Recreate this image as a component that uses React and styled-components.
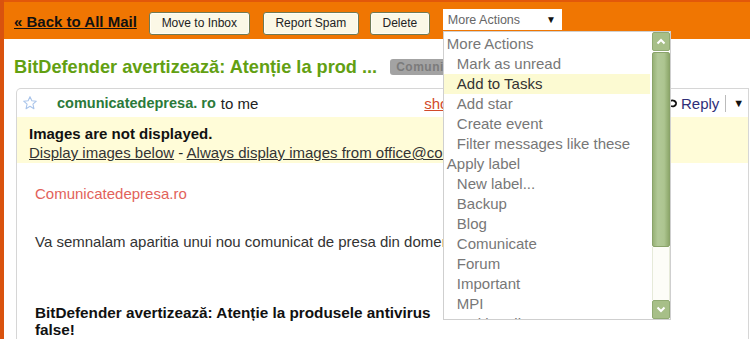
import React from "react";
import styled, { createGlobalStyle } from "styled-components";

const Global = createGlobalStyle`
  html, body { margin: 0; padding: 0; background: #fff; overflow: hidden; }
  body { font-family: "Liberation Sans", Arial, sans-serif; }
`;

const Page = styled.div`
  width: 746px;
  height: 339px;
  border-left: 4px solid #d9520e;
  background: #fff;
  overflow: hidden;
  position: relative;
`;

const TopBar = styled.div`
  height: 37px;
  border-top: 2px solid #e2580a;
  background: #f07602;
  display: flex;
  align-items: center;
  padding-left: 10px;
`;

const BackLink = styled.a`
  font-size: 15px;
  font-weight: bold;
  color: #111;
  text-decoration: underline;
  margin-top: 2px;
  margin-right: 12px;
  white-space: nowrap;
`;

const Button = styled.button`
  width: ${(p) => p.$w}px;
  height: 23px;
  margin-top: 5px;
  margin-right: ${(p) => p.$gap}px;
  padding: 0;
  border: 1px solid #6f7b55;
  border-radius: 3px;
  background: #fbf8e6;
  box-shadow: inset 0 0 0 1px #fffef6;
  font-family: "Liberation Sans", Arial, sans-serif;
  font-size: 12px;
  color: #222;
`;

const SelectWrap = styled.div`
  position: relative;
  align-self: flex-start;
  margin-top: 7px;
`;

const SelectBox = styled.div`
  width: 108px;
  height: 21px;
  background: #fff;
  display: flex;
  align-items: center;
  justify-content: space-between;
  padding: 0 6px 0 5px;
  font-size: 12.5px;
  color: #666;
`;

const Caret = styled.span`
  font-size: 10px;
  color: #111;
`;

const Menu = styled.div`
  position: absolute;
  left: 0;
  top: 22px;
  width: 226px;
  height: 287px;
  background: #fff;
  border: 1px solid #cfcfcf;
  display: flex;
  z-index: 10;
  overflow: hidden;
`;

const MenuList = styled.div`
  flex: 1;
  padding-top: 2px;
  padding-right: 2px;
`;

const MenuItem = styled.div`
  height: 20px;
  line-height: 20px;
  padding-left: ${(p) => (p.$head ? 3 : 13)}px;
  font-size: 15px;
  color: ${(p) => (p.$active ? "#333" : "#777")};
  background: ${(p) => (p.$active ? "#fcfad2" : "transparent")};
  white-space: nowrap;
`;

const ScrollBar = styled.div`
  width: 18px;
  display: flex;
  flex-direction: column;
`;

const ScrollBtn = styled.div`
  height: 17px;
  background: #a7bf88;
  border: 1px solid #90aa72;
  border-radius: 2px;
  display: flex;
  align-items: center;
  justify-content: center;
`;

const Thumb = styled.div`
  height: 193px;
  margin-top: 1px;
  background: linear-gradient(90deg, #98b277 0, #b2c997 30%, #adc590 70%, #8ea86c 100%);
  border: 1px solid #8aa36a;
  border-radius: 2px;
`;

const Track = styled.div`
  flex: 1;
  background: #fdfdf8;
  border-left: 1px solid #e6ead9;
  border-right: 1px solid #e6ead9;
`;

const SubjectRow = styled.div`
  display: flex;
  align-items: center;
  height: 42px;
  padding: 7px 0 0 10px;
  white-space: nowrap;
`;

const Subject = styled.div`
  font-size: 18.2px;
  color: #62a012;
  font-weight: bold;
`;

const Badge = styled.span`
  margin-left: 13px;
  background: #a3a3a3;
  color: #7b7b7b;
  font-size: 12px;
  font-weight: bold;
  height: 16px;
  line-height: 16px;
  padding: 0 6px;
  border-radius: 3px;
  letter-spacing: 0.5px;
`;

const Card = styled.div`
  margin-left: 12px;
  margin-right: 1px;
  border: 1px solid #d6d6d6;
  border-bottom: none;
  border-radius: 5px 0 0 0;
  height: 260px;
`;

const CardHead = styled.div`
  height: 28px;
  display: flex;
  align-items: center;
  position: relative;
  white-space: nowrap;
`;

const Star = styled.svg`
  margin-left: 5px;
  width: 16px;
  height: 16px;
`;

const Sender = styled.span`
  margin-left: 19px;
  font-size: 14.5px;
  font-weight: bold;
  color: #2b7a3a;
`;

const ToMe = styled.span`
  margin-left: 5px;
  font-size: 15px;
  color: #222;
`;

const ShowLink = styled.a`
  margin-left: 166px;
  font-size: 15px;
  color: #d24a2a;
  text-decoration: underline;
`;

const ReplyBox = styled.div`
  position: absolute;
  right: -1px;
  top: -1px;
  width: 80px;
  height: 28px;
  border: 1px solid #d6d6d6;
  border-bottom: none;
  border-radius: 5px 0 0 0;
  display: flex;
  align-items: center;
  padding-left: 8px;
  gap: 3px;
  font-size: 15px;
  color: #2e2e78;
  background: #fff;
`;

const Sep = styled.span`
  width: 1px;
  height: 17px;
  background: #bbb;
  margin-left: 3px;
`;

const ReplyCaret = styled.span`
  font-size: 11px;
  color: #111;
  margin-left: 4px;
`;

const Notice = styled.div`
  background: #fffcd8;
  height: 46px;
  padding: 7px 0 0 12px;
  box-sizing: border-box;
  font-size: 15px;
  color: #222;
  line-height: 19px;
  white-space: nowrap;
  overflow: hidden;
`;

const NoticeTitle = styled.div`
  font-weight: bold;
  color: #111;
`;

const NoticeLink = styled.span`
  text-decoration: underline;
  color: #333;
`;

const Body = styled.div`
  padding: 22px 0 0 18px;
  font-size: 15px;
  line-height: 18px;
  color: #333;
  white-space: nowrap;
`;

const BrandLink = styled.div`
  color: #e2625a;
  height: 48px;
`;

const Para = styled.div`
  height: 71px;
`;

const BoldPara = styled.div`
  font-weight: bold;
  font-size: 15.3px;
  color: #111;
  line-height: 17px;
`;

const menuItems = [
  { t: "More Actions", head: true },
  { t: "Mark as unread" },
  { t: "Add to Tasks", active: true },
  { t: "Add star" },
  { t: "Create event" },
  { t: "Filter messages like these" },
  { t: "Apply label", head: true },
  { t: "New label..." },
  { t: "Backup" },
  { t: "Blog" },
  { t: "Comunicate" },
  { t: "Forum" },
  { t: "Important" },
  { t: "MPI" },
  { t: "Multimedia" },
];

const Chevron = ({ up }) => (
  <svg width="10" height="7" viewBox="0 0 10 7">
    <path
      d={up ? "M1.5 5.5 L5 2 L8.5 5.5" : "M1.5 1.5 L5 5 L8.5 1.5"}
      fill="none"
      stroke="#fff"
      strokeWidth="2"
    />
  </svg>
);

export default function App() {
  return (
    <>
      <Global />
      <Page>
        <TopBar>
          <BackLink>« Back to All Mail</BackLink>
          <Button $w={101} $gap={13}>Move to Inbox</Button>
          <Button $w={96} $gap={11}>Report Spam</Button>
          <Button $w={60} $gap={13}>Delete</Button>
          <SelectWrap>
            <SelectBox>
              <span>More Actions</span>
              <Caret>▼</Caret>
            </SelectBox>
            <Menu>
              <MenuList>
                {menuItems.map((m) => (
                  <MenuItem key={m.t} $head={m.head} $active={m.active}>
                    {m.t}
                  </MenuItem>
                ))}
              </MenuList>
              <ScrollBar>
                <ScrollBtn>
                  <Chevron up />
                </ScrollBtn>
                <Thumb />
                <Track />
                <ScrollBtn>
                  <Chevron />
                </ScrollBtn>
              </ScrollBar>
            </Menu>
          </SelectWrap>
        </TopBar>
        <SubjectRow>
          <Subject>BitDefender avertizează: Atenție la prod ...</Subject>
          <Badge>Comunicate</Badge>
        </SubjectRow>
        <Card>
          <CardHead>
            <Star viewBox="0 0 24 24">
              <path
                d="M12 2.5 L14.8 8.7 L21.5 9.3 L16.4 13.8 L17.9 20.5 L12 17 L6.1 20.5 L7.6 13.8 L2.5 9.3 L9.2 8.7 Z"
                fill="none"
                stroke="#a9c4ea"
                strokeWidth="1.6"
                strokeLinejoin="round"
              />
            </Star>
            <Sender>comunicatedepresa. ro</Sender>
            <ToMe>to me</ToMe>
            <ShowLink>show details</ShowLink>
            <ReplyBox>
              <svg width="10" height="10" viewBox="0 0 10 10">
                <path d="M2 3 C5 1.5 8.5 3 8 6 C7.6 8 5 8.8 3 8" fill="none" stroke="#111" strokeWidth="1.8" />
              </svg>
              <span>Reply</span>
              <Sep />
              <ReplyCaret>▼</ReplyCaret>
            </ReplyBox>
          </CardHead>
          <Notice>
            <NoticeTitle>Images are not displayed.</NoticeTitle>
            <div>
              <NoticeLink>Display images below</NoticeLink> -{" "}
              <NoticeLink>Always display images from office@comunicatedepresa.ro</NoticeLink>
            </div>
          </Notice>
          <Body>
            <BrandLink>Comunicatedepresa.ro</BrandLink>
            <Para>Va semnalam aparitia unui nou comunicat de presa din domeniul IT&amp;C.</Para>
            <BoldPara>
              BitDefender avertizează: Atenție la produsele antivirus
              <br />
              false!
            </BoldPara>
          </Body>
        </Card>
      </Page>
    </>
  );
}
